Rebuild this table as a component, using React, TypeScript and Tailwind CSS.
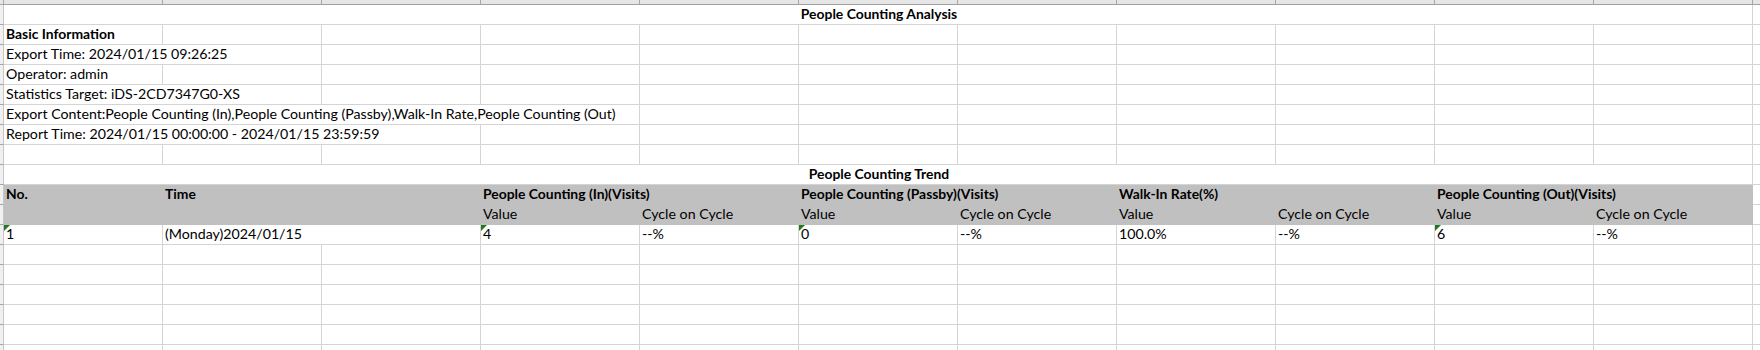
import type { ReactNode } from "react";

const spanClass: Record<number, string> = {
  1: "",
  2: "col-span-2",
  3: "col-span-3",
  4: "col-span-4",
  11: "col-span-11",
};

type CellProps = {
  span?: number;
  bold?: boolean;
  center?: boolean;
  gray?: boolean;
  flag?: boolean;
  children?: ReactNode;
};

function Cell({ span = 1, bold, center, gray, flag, children }: CellProps) {
  return (
    <div
      className={`relative h-5 whitespace-nowrap border-r border-b pl-[2px] leading-[18px] ${spanClass[span]} ${
        gray ? "border-[#c0c0c0] bg-[#c0c0c0]" : "border-[#d4d4d4] bg-white"
      } ${bold ? "text-[13.9px] font-bold" : ""} ${center ? "text-center" : ""}`}
    >
      {flag ? <span className="absolute top-0 left-0 h-0 w-0 border-t-[6px] border-r-[6px] border-t-[#1e7b1e] border-r-transparent" /> : null}
      {children}
    </div>
  );
}

function Blank({ n, gray }: { n: number; gray?: boolean }) {
  return (
    <>
      {Array.from({ length: n }, (_, i) => (
        <Cell key={i} gray={gray} />
      ))}
    </>
  );
}

function Row({ children }: { children: ReactNode }) {
  return (
    <>
      <div className="h-5 border-r border-b border-r-[#c6c6c6] border-b-[#a6a6a6] bg-[#f0f0f0]" />
      {children}
      <div className="h-5 border-b border-[#d4d4d4]" />
    </>
  );
}

export default function App() {
  return (
    <div className="h-[350px] w-full overflow-hidden bg-white font-[Lato,sans-serif] text-[14.2px] text-black">
      <div className="grid grid-cols-[4px_repeat(11,159px)_1fr]">
        {/* column header strip */}
        <div className="h-[5px] border-r border-b border-[#a6a6a6] bg-[#e6e6e6]" />
        {Array.from({ length: 11 }, (_, i) => (
          <div key={i} className="h-[5px] border-r border-b border-r-[#a6a6a6] border-b-[#a0a0a0] bg-[#e6e6e6]" />
        ))}
        <div className="h-[5px] border-b border-[#a0a0a0] bg-[#e6e6e6]" />

        <Row>
          <Cell span={11} bold center>People Counting Analysis</Cell>
        </Row>
        <Row>
          <Cell bold>Basic Information</Cell>
          <Blank n={10} />
        </Row>
        <Row>
          <Cell span={2}>Export Time: 2024/01/15 09:26:25</Cell>
          <Blank n={9} />
        </Row>
        <Row>
          <Cell>Operator: admin</Cell>
          <Blank n={10} />
        </Row>
        <Row>
          <Cell span={2}>Statistics Target: iDS-2CD7347G0-XS</Cell>
          <Blank n={9} />
        </Row>
        <Row>
          <Cell span={4}>Export Content:People Counting (In),People Counting (Passby),Walk-In Rate,People Counting (Out)</Cell>
          <Blank n={7} />
        </Row>
        <Row>
          <Cell span={3}>Report Time: 2024/01/15 00:00:00 - 2024/01/15 23:59:59</Cell>
          <Blank n={8} />
        </Row>
        <Row>
          <Blank n={11} />
        </Row>
        <Row>
          <Cell span={11} bold center>People Counting Trend</Cell>
        </Row>
        <Row>
          <Cell gray bold>No.</Cell>
          <Cell gray bold span={2}>Time</Cell>
          <Cell gray bold span={2}>People Counting (In)(Visits)</Cell>
          <Cell gray bold span={2}>People Counting (Passby)(Visits)</Cell>
          <Cell gray bold span={2}>Walk-In Rate(%)</Cell>
          <Cell gray bold span={2}>People Counting (Out)(Visits)</Cell>
        </Row>
        <Row>
          <Cell gray />
          <Cell gray span={2} />
          <Cell gray>Value</Cell>
          <Cell gray>Cycle on Cycle</Cell>
          <Cell gray>Value</Cell>
          <Cell gray>Cycle on Cycle</Cell>
          <Cell gray>Value</Cell>
          <Cell gray>Cycle on Cycle</Cell>
          <Cell gray>Value</Cell>
          <Cell gray>Cycle on Cycle</Cell>
        </Row>
        <Row>
          <Cell flag>1</Cell>
          <Cell span={2}>(Monday)2024/01/15</Cell>
          <Cell flag>4</Cell>
          <Cell>--%</Cell>
          <Cell flag>0</Cell>
          <Cell>--%</Cell>
          <Cell>100.0%</Cell>
          <Cell>--%</Cell>
          <Cell flag>6</Cell>
          <Cell>--%</Cell>
        </Row>
        {Array.from({ length: 6 }, (_, r) => (
          <Row key={r}>
            <Blank n={11} />
          </Row>
        ))}
      </div>
    </div>
  );
}
